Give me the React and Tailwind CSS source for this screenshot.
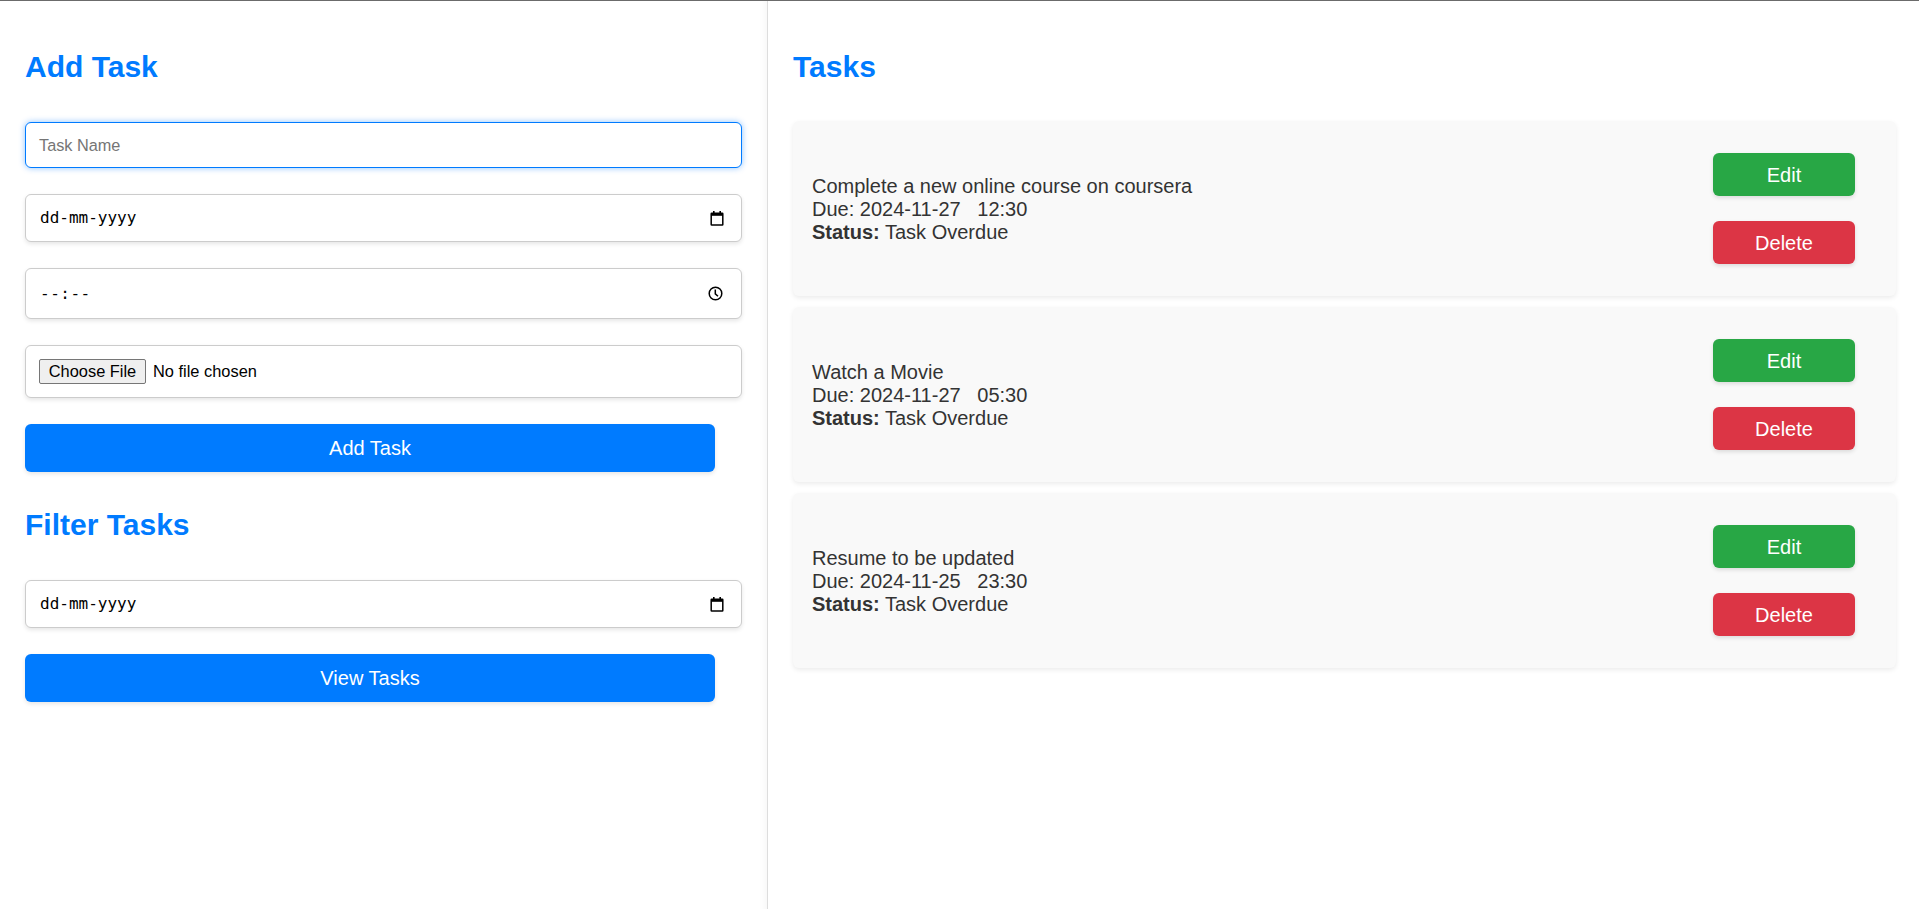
import React from "react";

function CalendarIcon() {
  return (
    <svg width="14" height="15" viewBox="0 0 14 15" className="block">
      <rect x="3" y="0" width="1.6" height="2.5" fill="#000" />
      <rect x="9.4" y="0" width="1.6" height="2.5" fill="#000" />
      <rect x="1.2" y="2.2" width="11.6" height="11.8" fill="none" stroke="#000" strokeWidth="1.5" rx="0.5" />
      <rect x="1.2" y="2.2" width="11.6" height="2.6" fill="#000" />
    </svg>
  );
}

function ClockIcon() {
  return (
    <svg width="15" height="15" viewBox="0 0 15 15" className="block">
      <circle cx="7.5" cy="7.5" r="6.3" fill="none" stroke="#000" strokeWidth="1.5" />
      <path d="M7.3 3.6 V7.8 L10 10.2" fill="none" stroke="#000" strokeWidth="1.5" />
    </svg>
  );
}

function DateField({ className = "" }) {
  return (
    <div
      className={`h-[48px] flex items-center justify-between rounded-[6px] border border-[#ccc] bg-white pl-[14px] pr-[17px] shadow-[0_2px_4px_rgba(0,0,0,0.1)] ${className}`}
    >
      <span className="font-['DejaVu_Sans_Mono',monospace] text-[16px] text-black">dd-mm-yyyy</span>
      <CalendarIcon />
    </div>
  );
}

function TaskCard({ title, due, time }) {
  return (
    <div className="h-[175px] flex items-center justify-between rounded-[6px] bg-[#f9f9f9] pl-[19px] pr-[41px] shadow-[0_2px_5px_rgba(0,0,0,0.08)]">
      <div className="pt-[2px] text-[20px] leading-[23px] text-[#333] whitespace-pre">
        <div>{title}</div>
        <div>{`Due: ${due}   ${time}`}</div>
        <div>
          <span className="font-bold">Status:</span> Task Overdue
        </div>
      </div>
      <div className="flex flex-col gap-[25px]">
        <button className="w-[142px] h-[43px] rounded-[6px] bg-[#28a745] text-white text-[20px] shadow-[0_2px_4px_rgba(0,0,0,0.12)]">
          Edit
        </button>
        <button className="w-[142px] h-[43px] rounded-[6px] bg-[#dc3545] text-white text-[20px] shadow-[0_2px_4px_rgba(0,0,0,0.12)]">
          Delete
        </button>
      </div>
    </div>
  );
}

export default function App() {
  return (
    <div className="min-h-screen flex border-t border-[#6b6b6b] bg-white font-['Liberation_Sans',Arial,sans-serif]">
      {/* Left panel */}
      <div className="w-[768px] shrink-0 border-r border-[#ddd] px-[25px] pt-[49px] shadow-[inset_-10px_0_10px_-10px_rgba(0,0,0,0.06)]">
        <h2 className="text-[30px] leading-[34px] font-bold text-[#007bff]">Add Task</h2>

        <div className="mt-[38px] h-[46px] flex items-center rounded-[6px] border border-[#007bff] bg-white px-[13px] shadow-[0_0_6px_rgba(0,123,255,0.45)]">
          <span className="text-[16.3px] text-[#757575]">Task Name</span>
        </div>

        <DateField className="mt-[26px]" />

        <div className="mt-[26px] h-[51px] flex items-center justify-between rounded-[6px] border border-[#ccc] bg-white pl-[14px] pr-[18px] shadow-[0_2px_4px_rgba(0,0,0,0.1)]">
          <span className="font-['DejaVu_Sans_Mono',monospace] text-[16px] tracking-[0.5px] text-black">--:--</span>
          <ClockIcon />
        </div>

        <div className="mt-[26px] h-[53px] flex items-center rounded-[6px] border border-[#ccc] bg-white pl-[13px] shadow-[0_2px_4px_rgba(0,0,0,0.1)]">
          <span className="w-[107px] h-[25px] flex items-center justify-center rounded-[2px] border border-[#767676] bg-[#efefef] text-[16.4px] text-black">
            Choose File
          </span>
          <span className="ml-[7px] text-[16.4px] text-black">No file chosen</span>
        </div>

        <button className="mt-[26px] w-[690px] h-[48px] rounded-[6px] bg-[#007bff] text-white text-[20px] shadow-[0_2px_4px_rgba(0,0,0,0.1)]">
          Add Task
        </button>

        <h2 className="mt-[36px] text-[30px] leading-[34px] font-bold text-[#007bff]">Filter Tasks</h2>

        <DateField className="mt-[38px]" />

        <button className="mt-[26px] w-[690px] h-[48px] rounded-[6px] bg-[#007bff] text-white text-[20px] shadow-[0_2px_4px_rgba(0,0,0,0.1)]">
          View Tasks
        </button>
      </div>

      {/* Right panel */}
      <div className="flex-1 pl-[25px] pr-[23px] pt-[49px]">
        <h2 className="text-[30px] leading-[34px] font-bold text-[#007bff]">Tasks</h2>
        <div className="mt-[37px] flex flex-col gap-[11px]">
          <TaskCard title="Complete a new online course on coursera" due="2024-11-27" time="12:30" />
          <TaskCard title="Watch a Movie" due="2024-11-27" time="05:30" />
          <TaskCard title="Resume to be updated" due="2024-11-25" time="23:30" />
        </div>
      </div>
    </div>
  );
}
